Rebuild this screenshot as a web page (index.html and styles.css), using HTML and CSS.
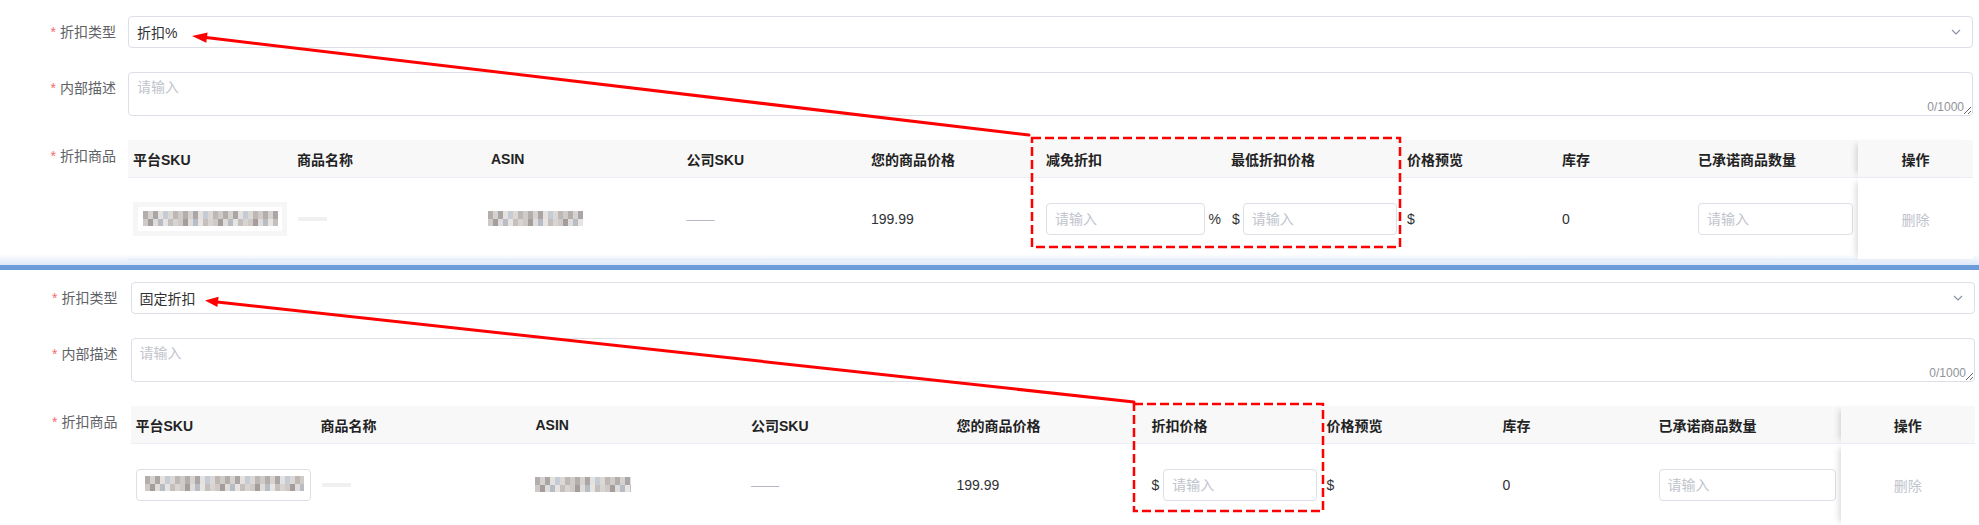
FILE: index.html
```html
<!DOCTYPE html>
<html lang="zh-CN">
<head>
    <meta charset="UTF-8">
    <meta name="viewport" content="width=device-width, initial-scale=1.0">
    <title>折扣商品设置</title>
    <link rel="stylesheet" href="styles.css">
</head>
<body>
    <div class="page">
        <!-- 折扣% -->
        <section class="discount-form">
            <div class="form-item">
                <label class="form-label"><span class="req">*</span>折扣类型</label>
                <div class="form-control">
                    <div class="select">
                        <span>折扣%</span>
                        <svg class="select-arrow" viewBox="0 0 10 6"><polyline points="1,1 5,5 9,1"/></svg>
                    </div>
                </div>
            </div>
            <div class="form-item">
                <label class="form-label"><span class="req">*</span>内部描述</label>
                <div class="form-control">
                    <textarea placeholder="请输入"></textarea>
                    <span class="word-count">0/1000</span>
                </div>
            </div>
            <div class="form-item">
                <label class="form-label"><span class="req">*</span>折扣商品</label>
                <div class="form-control">
                    <div class="goods-table goods-percent">
                        <div class="th">平台SKU</div>
                        <div class="th">商品名称</div>
                        <div class="th">ASIN</div>
                        <div class="th">公司SKU</div>
                        <div class="th">您的商品价格</div>
                        <div class="th">减免折扣</div>
                        <div class="th">最低折扣价格</div>
                        <div class="th">价格预览</div>
                        <div class="th">库存</div>
                        <div class="th">已承诺商品数量</div>
                        <div class="th fixed">操作</div>

                        <div class="td"><div class="sku-blur"><div class="mosaic sku-a"></div></div></div>
                        <div class="td"><div class="name-blur"></div></div>
                        <div class="td"><div class="mosaic asin-a"></div></div>
                        <div class="td empty">——</div>
                        <div class="td">199.99</div>
                        <div class="td unit-gap"><input class="cell-input" placeholder="请输入"><span>%</span></div>
                        <div class="td unit-gap-sm"><span>$</span><input class="cell-input" placeholder="请输入"></div>
                        <div class="td">$</div>
                        <div class="td">0</div>
                        <div class="td"><input class="cell-input" placeholder="请输入"></div>
                        <div class="td fixed"><span class="link-disabled">删除</span></div>
                    </div>
                </div>
            </div>
        </section>

        <div class="divider"></div>

        <!-- 固定折扣 -->
        <section class="discount-form second">
            <div class="form-item">
                <label class="form-label"><span class="req">*</span>折扣类型</label>
                <div class="form-control">
                    <div class="select">
                        <span>固定折扣</span>
                        <svg class="select-arrow" viewBox="0 0 10 6"><polyline points="1,1 5,5 9,1"/></svg>
                    </div>
                </div>
            </div>
            <div class="form-item">
                <label class="form-label"><span class="req">*</span>内部描述</label>
                <div class="form-control">
                    <textarea placeholder="请输入"></textarea>
                    <span class="word-count">0/1000</span>
                </div>
            </div>
            <div class="form-item">
                <label class="form-label"><span class="req">*</span>折扣商品</label>
                <div class="form-control">
                    <div class="goods-table goods-fixed">
                        <div class="th">平台SKU</div>
                        <div class="th">商品名称</div>
                        <div class="th">ASIN</div>
                        <div class="th">公司SKU</div>
                        <div class="th">您的商品价格</div>
                        <div class="th">折扣价格</div>
                        <div class="th">价格预览</div>
                        <div class="th">库存</div>
                        <div class="th">已承诺商品数量</div>
                        <div class="th fixed">操作</div>

                        <div class="td"><div class="sku-input"><div class="mosaic sku-b"></div></div></div>
                        <div class="td"><div class="name-blur"></div></div>
                        <div class="td"><div class="mosaic asin-b"></div></div>
                        <div class="td empty">——</div>
                        <div class="td">199.99</div>
                        <div class="td unit-gap"><span>$</span><input class="cell-input" placeholder="请输入"></div>
                        <div class="td">$</div>
                        <div class="td">0</div>
                        <div class="td"><input class="cell-input" placeholder="请输入"></div>
                        <div class="td fixed"><span class="link-disabled">删除</span></div>
                    </div>
                </div>
            </div>
        </section>

        <!-- 标注 -->
        <svg class="annotations" width="1979" height="525" viewBox="0 0 1979 525">
            <g fill="none" stroke="#ff0000" stroke-width="2.5" stroke-dasharray="9 4">
                <rect x="1032" y="138" width="368" height="109"/>
                <rect x="1134" y="404" width="189" height="107"/>
            </g>
            <g stroke="#ff0000" stroke-width="3" stroke-linecap="round">
                <line x1="1029" y1="135" x2="204" y2="37.3"/>
                <line x1="1134" y1="402" x2="217" y2="301.9"/>
            </g>
            <g fill="#ff0000">
                <polygon points="192,36 206.3,42.8 207.6,32.5"/>
                <polygon points="205,300.6 217.4,307 218.6,296.8"/>
            </g>
        </svg>
    </div>
</body>
</html>
```

FILE: styles.css
```css
body {
    margin: 0;
    font-family: "Liberation Sans", "Noto Sans CJK SC", sans-serif;
    font-size: 14px;
    color: #606266;
    background-color: #fff;
}
.page {
    position: relative;
    width: 1979px;
    height: 525px;
    overflow: hidden;
}
.discount-form {
    padding: 16px 6px 0 0;
}
.discount-form.second {
    padding: 12px 4px 0 0;
}
.form-item {
    display: flex;
    margin-bottom: 24px;
}
.form-item:last-child {
    margin-bottom: 0;
}
.form-label {
    flex: 0 0 128px;
    box-sizing: border-box;
    padding-right: 12px;
    text-align: right;
    line-height: 32px;
    color: #606266;
}
.second .form-label {
    flex-basis: 130.5px;
    padding-right: 13px;
}
.req {
    color: #f56c6c;
    margin-right: 4px;
}
.form-control {
    flex: 1;
    min-width: 0;
    position: relative;
}

/* select */
.select {
    height: 32px;
    box-sizing: border-box;
    border: 1px solid #dcdfe6;
    border-radius: 4px;
    padding: 0 11px 0 8px;
    display: flex;
    align-items: center;
    justify-content: space-between;
    color: #303133;
}
.select-arrow {
    width: 10px;
    height: 6px;
    fill: none;
    stroke: #8a96a8;
    stroke-width: 1.2;
}

/* textarea */
textarea {
    display: block;
    width: 100%;
    height: 44px;
    box-sizing: border-box;
    border: 1px solid #dcdfe6;
    border-radius: 4px;
    padding: 4px 8px;
    font: inherit;
    line-height: 20px;
    color: #606266;
    resize: vertical;
    outline: none;
}
textarea::placeholder,
.cell-input::placeholder {
    color: #c0c4cc;
}
.word-count {
    position: absolute;
    right: 9px;
    bottom: 2px;
    font-size: 12px;
    line-height: 14px;
    color: #909399;
}

/* table */
.goods-table {
    display: grid;
}
.goods-percent {
    grid-template-columns: 164px 194px 195.5px 184.5px 175px 185px 176px 155px 136px 165px 115px;
}
.goods-fixed {
    grid-template-columns: 185px 215px 215.5px 205.5px 195px 175px 176px 156px 187px 134.5px;
}
.th,
.td {
    box-sizing: border-box;
    padding: 0 5px;
    display: flex;
    align-items: center;
    white-space: nowrap;
    border-bottom: 1px solid #ebeef5;
}
.th {
    height: 38px;
    background-color: #f8f8f9;
    font-weight: bold;
    color: #222;
}
.td {
    height: 82px;
    color: #303133;
    background-color: #fff;
}
.fixed {
    justify-content: center;
    position: relative;
    z-index: 1;
    box-shadow: -6px 0 6px -4px rgba(0, 0, 0, 0.15);
}
.unit-gap {
    gap: 4px;
}
.unit-gap-sm {
    gap: 3px;
    padding-left: 6px;
}
.cell-input {
    flex: 1;
    min-width: 0;
    height: 32px;
    box-sizing: border-box;
    border: 1px solid #dcdfe6;
    border-radius: 4px;
    padding: 0 8px;
    font: inherit;
    color: #606266;
    outline: none;
}
.empty {
    color: #b4b8bf;
}
.link-disabled {
    color: #c0c4cc;
}

/* blurred product data */
.mosaic {
    height: 15px;
    background:
        repeating-linear-gradient(90deg, #b3adab 0 5px, #d6d2cf 5px 10px, #aaa6a8 10px 15px, #e4e1de 15px 20px, #c6ccd5 20px 25px, #dcd8d6 25px 30px, #bdb8b6 30px 35px, #cfcbc8 35px 40px) top / 100% 8px no-repeat,
        repeating-linear-gradient(90deg, #cfcac8 0 5px, #a39e9d 5px 10px, #e0dcd9 10px 15px, #b8bcc5 15px 20px, #e7e4e1 20px 25px, #c5c0be 25px 30px, #d8d4d2 30px 35px) bottom / 100% 7px no-repeat;
}
.sku-blur {
    width: 100%;
    height: 34px;
    box-sizing: border-box;
    border: 5px solid #f6f6f6;
    padding: 4px 5px;
}
.sku-a {
    width: 135px;
}
.sku-input {
    width: 100%;
    height: 32px;
    box-sizing: border-box;
    border: 1px solid #dcdfe6;
    border-radius: 4px;
    padding: 6px 8px;
}
.sku-b {
    width: 159px;
}
.asin-a {
    width: 95px;
    margin-left: -3px;
}
.asin-b {
    width: 96px;
    margin-left: -1px;
}
.name-blur {
    width: 29px;
    height: 4px;
    margin-left: 1px;
    background-color: #f0f0f0;
}

/* separator between the two screenshots */
.divider {
    position: relative;
    height: 16px;
    margin-top: -6px;
    background: linear-gradient(to bottom, rgba(225, 235, 249, 0) 0, rgba(214, 228, 247, 0.85) 11px, #6c9cd9 11px, #6c9cd9 16px);
}

.annotations {
    position: absolute;
    top: 0;
    left: 0;
    pointer-events: none;
}
```
